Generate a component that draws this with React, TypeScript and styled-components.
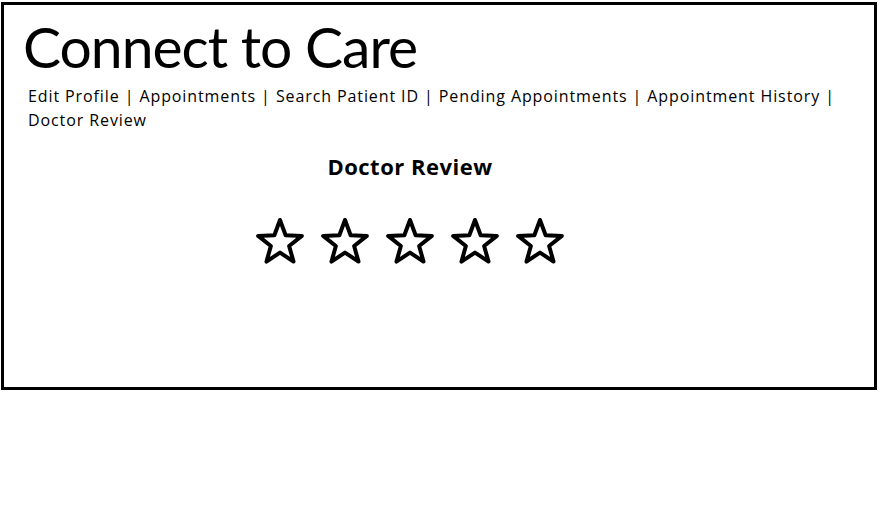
import styled, { createGlobalStyle } from 'styled-components';

const GlobalStyle = createGlobalStyle`
  body {
    margin: 0;
    background: #fff;
    color: #000;
    font-family: 'Open Sans', Lato, sans-serif;
  }
`;

const NAV_ITEMS = ['Edit Profile', 'Appointments', 'Search Patient ID', 'Pending Appointments', 'Appointment History', 'Doctor Review'];

const Page = styled.div`
  padding: 2px 0 0 1px;
`;
const Frame = styled.div`
  box-sizing: border-box;
  width: 876px;
  height: 388px;
  border: 3px solid #000;
  padding: 0 0 0 19px;
`;
const Title = styled.h1`
  margin: 7px 0 0;
  font-family: Lato, 'Open Sans', sans-serif;
  font-size: 57px;
  font-weight: 400;
  letter-spacing: -1px;
  line-height: 1.2;
`;
const Nav = styled.nav`
  width: 835px;
  margin: 4px 0 0 5px;
  font-size: 16px;
  letter-spacing: 0.9px;
  line-height: 24px;
`;
const NavLink = styled.a`
  color: #000;
  text-decoration: none;
  white-space: nowrap;
  cursor: pointer;
`;
const Review = styled.section`
  margin: 21px 0 0 -19px;
  padding-right: 58px;
  display: flex;
  flex-direction: column;
  align-items: center;
`;
const ReviewHeading = styled.h2`
  margin: 0;
  font-size: 22px;
  font-weight: 700;
  letter-spacing: 0.5px;
  line-height: 1.2;
`;
const StarRow = styled.div`
  display: flex;
  gap: 17px;
  margin-top: 37px;
`;
const StarButton = styled.button`
  width: 48px;
  height: 48px;
  padding: 0;
  border: 0;
  background: none;
  cursor: pointer;
  svg {
    display: block;
  }
`;

const starPoints = (() => {
  const cx = 24;
  const cy = 26;
  const R = 23;
  const r = 9.6;
  const pts: string[] = [];
  for (let i = 0; i < 10; i++) {
    const rad = i % 2 === 0 ? R : r;
    const a = (Math.PI / 5) * i - Math.PI / 2;
    pts.push(`${(cx + rad * Math.cos(a)).toFixed(2)},${(cy + rad * Math.sin(a)).toFixed(2)}`);
  }
  return pts.join(' ');
})();

const Star = () => (
  <svg width="48" height="48" viewBox="0 0 48 48">
    <polygon points={starPoints} fill="none" stroke="#000" strokeWidth="4" strokeLinejoin="round" />
  </svg>
);

const App = () => {
  return (
    <Page>
      <GlobalStyle />
      <Frame>
        <Title>Connect to Care</Title>
        <Nav>
          {NAV_ITEMS.map((item, i) => (
            <span key={item}>
              <NavLink>{item}</NavLink>
              {i < NAV_ITEMS.length - 1 && ' | '}
            </span>
          ))}
        </Nav>
        <Review>
          <ReviewHeading>Doctor Review</ReviewHeading>
          <StarRow>
            {[1, 2, 3, 4, 5].map((n) => (
              <StarButton key={n} aria-label={`${n} star`}>
                <Star />
              </StarButton>
            ))}
          </StarRow>
        </Review>
      </Frame>
    </Page>
  );
};

export default App;
